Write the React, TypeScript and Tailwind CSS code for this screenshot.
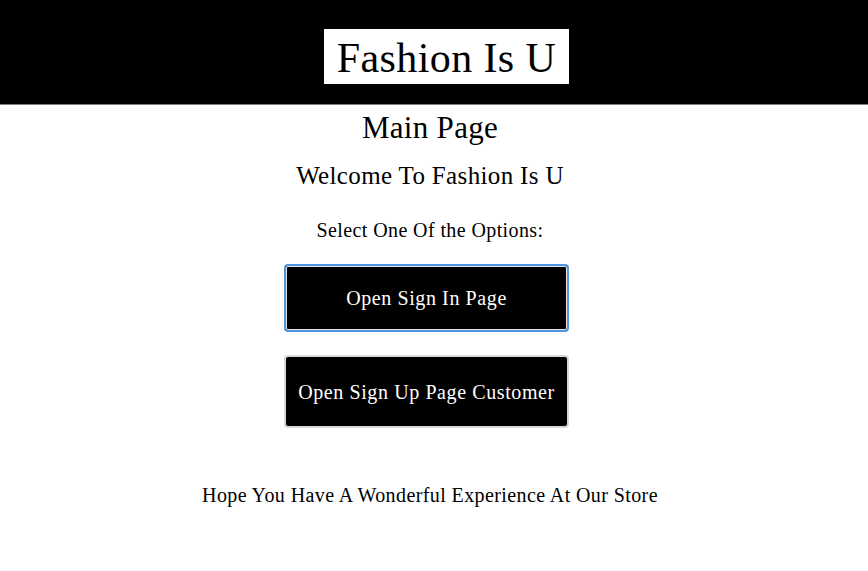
export default function App() {
  return (
    <div className="min-h-[571px] bg-white text-black" style={{ fontFamily: '"Liberation Serif", "DejaVu Serif", serif' }}>
      <header className="h-[105px] bg-black border-b border-[#7a7a7a] flex items-start justify-center pl-[25px] pt-[29px]">
        <div className="bg-white h-[55px] w-[245px] flex items-start justify-center pt-[8px] text-[42px] leading-[42px] tracking-[0.4px]">
          Fashion Is U
        </div>
      </header>
      <div className="w-[860px] flex flex-col items-center">
        <h1 className="mt-[5px] text-[31px] leading-[36px] tracking-[0.3px]">Main Page</h1>
        <h2 className="mt-[15px] text-[25px] leading-[30px] tracking-[0.35px]">Welcome To Fashion Is U</h2>
        <p className="mt-[27px] text-[20px] leading-[24px] tracking-[0.4px]">Select One Of the Options:</p>
        <button className="mt-[22px] mr-[7px] w-[285px] h-[68px] bg-black text-white text-[20px] tracking-[0.6px] rounded-[4px] border-2 border-[#4f97dd] outline outline-1 outline-[#e3e3e3] -outline-offset-[3px]">
          Open Sign In Page
        </button>
        <button className="mt-[23px] mr-[7px] w-[285px] h-[73px] bg-black text-white text-[20px] tracking-[0.6px] rounded-[4px] border-2 border-[#d8d8d8]">
          Open Sign Up Page Customer
        </button>
        <p className="mt-[55px] text-[20px] leading-[24px] tracking-[0.4px]">Hope You Have A Wonderful Experience At Our Store</p>
      </div>
    </div>
  );
}
